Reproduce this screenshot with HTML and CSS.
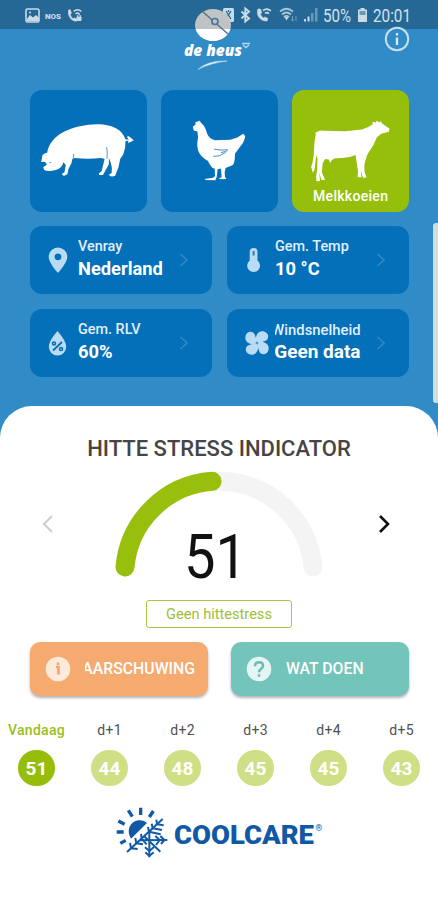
FILE: index.html
```
<!DOCTYPE html>
<html lang="nl">
<head>
  <meta charset="UTF-8" />
  <meta name="viewport" content="width=device-width, initial-scale=1" />
  <title>CoolCare</title>
  <link rel="stylesheet" href="styles.css">
</head>
<body>
  <div class="app">
    <div class="status-bar">
      <div class="status-left">
        <svg width="15" height="15" viewBox="0 0 15 15"><rect x="1" y="1" width="13" height="13" rx="1.5" fill="none" stroke="#c9dbe7" stroke-width="1.6"/><path d="M2 11l3-4 3 2.500 3-2.500 3 3v3H2z" fill="#c9dbe7"/><circle cx="5" cy="4.500" r="1" fill="#c9dbe7"/></svg>
        <svg width="18" height="15" viewBox="0 0 18 15"><text class="nos" x="1" y="10.500" textLength="16" lengthAdjust="spacingAndGlyphs">NOS</text></svg>
        <svg width="17" height="15" viewBox="0 0 17 15"><path d="M2.500 1.500C.5 7 5 13.500 10.500 13.500l1-2.500-3-1.500-1.300 1Q5 9 4.500 6.500l1.300-1.300L4.500 1.500z" fill="#c9dbe7"/><path d="M7.500 3.500Q11.500 0 15.500 3.500M9.500 6Q11.500 4 13.500 6" fill="none" stroke="#c9dbe7" stroke-width="1.300"/><rect x="10.500" y="8.500" width="5" height="4.500" rx="1" fill="#c9dbe7"/><path d="M11.500 9V7.500q1.500-1.800 3 0V9" fill="none" stroke="#c9dbe7"/></svg>
      </div>
      <div class="status-right">
        <svg width="12" height="16" viewBox="0 0 12 16"><rect x="0" y="1" width="11" height="14" rx="1.500" fill="#c9dbe7"/><path d="M3 4l5 8M8 4l-5 8M5.500 3v2" stroke="#256896" stroke-width="1.300"/></svg>
        <svg width="11" height="16" viewBox="0 0 11 16"><path d="M1.500 4.500l7.500 7-3.700 3V1.500L9 4.500l-7.500 7" fill="none" stroke="#c9dbe7" stroke-width="1.900"/></svg>
        <svg width="16" height="16" viewBox="0 0 16 16"><path d="M2 2C-.5 8 4.500 14.500 11 14l.8-2.600-3-1.500-1.300 1Q5 9.500 4.300 7l1.500-1.200L4.500 2z" fill="#c9dbe7" stroke="#c9dbe7" stroke-width=".6"/><path d="M7 3.500Q11 .5 15 4M9 6.500q2-1.800 4 .2" fill="none" stroke="#c9dbe7" stroke-width="1.600"/></svg>
        <svg class="wifi" width="19" height="16" viewBox="0 0 19 16"><path d="M1 4.500Q7.500-1 14 4.500M3 7.500q4.500-4 9 0M5 10q2.500-2.300 5 0" fill="none" stroke="#a9c7da" stroke-width="1.700"/><path d="M7.500 13.500L5.500 10h4z" fill="#c9dbe7"/><path d="M13.500 14V9m-1.500 3.500l1.500 1.500 1.500-1.500M17 9v5" fill="none" stroke="#6f9fbd"/></svg>
        <svg width="15" height="16" viewBox="0 0 15 16"><path d="M1 12h2v2.500H1zM4.500 9.500h2v5h-2z" fill="#c9dbe7"/><path d="M8 6h2.500v8.500H8zM12 1h2.500v13.500H12z" fill="#6799b8"/></svg>
        <svg width="29" height="24" viewBox="0 0 29 24"><text class="clock" x="0" y="18.500" textLength="28" lengthAdjust="spacingAndGlyphs">50%</text></svg>
        <svg width="11" height="16" viewBox="0 0 11 16"><path d="M3.500 1h4v1.500H10V15H1V2.500h2.500z" fill="#c9dbe7"/><path d="M2.500 4h6v4h-6z" fill="#6799b8"/></svg>
        <svg width="39" height="24" viewBox="0 0 39 24"><text class="clock" x="0" y="18.500" textLength="38" lengthAdjust="spacingAndGlyphs">20:01</text></svg>
      </div>
    </div>

    <svg class="brand" width="70" height="65" viewBox="0 0 70 65">
      <clipPath id="disc"><ellipse cx="32" cy="18" rx="18" ry="16"/></clipPath>
      <g clip-path="url(#disc)"><path d="M10 0h50v35H10z" fill="#bfc3c6"/><path d="M10 22h50v15H10z" fill="#fff"/></g>
      <path d="M21 4l26 23" stroke="#526b7d" stroke-width="1.300"/>
      <circle cx="34" cy="14.500" r="3" fill="#bfc3c6" stroke="#47779b" stroke-width="1.700"/>
      <text class="brand-name" x="3" y="49" textLength="58" lengthAdjust="spacingAndGlyphs">de heus</text>
      <path d="M61 36.500h8M62 38l3 2.500 3-2.500" fill="none" stroke="#b7d8ee" stroke-width="1.400"/>
      <path d="M17 62.500Q27 53 46 54 29 56 17 62.500z" fill="#e4f2fb" stroke="#b4d7ee" stroke-width=".6"/>
    </svg>
    <svg class="info" width="26" height="26" viewBox="0 0 26 26"><circle cx="13" cy="13" r="11.200" fill="none" stroke="#c7e0f1" stroke-width="2"/><path d="M13 11.500v7.500M13 7v2.500" stroke="#d8ebf7" stroke-width="2.300"/></svg>

    <div class="animals">
      <div class="animal">
        <svg viewBox="15 14 350 366"><path d="M48 231L52 210Q58 204 66 203C70 175 92 151 118 139C155 120 215 111 250 121C277 126 296 143 302 163L312 163 307 157 309 152 317 157 327 165 317 171 309 174 311 167 302 168Q303 190 295 208L286 222 281 246 271 272Q263 276 254 273L253 268 260 265Q263 249 258 235L252 219 252 238 234 270 222 270 222 265 230 259 239 222 229 219Q187 223 149 219L142 221 139 235 130 253 127 268 116 273 110 267 118 262 122 240 115 232Q110 251 94 254 70 262 57 255L54 247 65 239Q62 227 48 231z" fill="#fff"/><path d="M146 207l-1 12M245 186l2 15-1 20M73 233l5-1" fill="none" stroke="#2e83bd" stroke-width="2.500"/></svg>
      </div>
      <div class="animal">
        <svg viewBox="20 14 350 366"><path d="M115 125L124 117 122 112 135 107 142 115Q153 124 158 145 165 162 182 165L228 164 249 157 267 146 273 153Q270 171 258 184L242 206Q242 231 236 240L214 249 211 262 212 275 216 282 201 283 193 281 202 276 200 251 190 252 187 276 183 286 151 285 154 281 174 279 182 274 181 250Q174 251 169 242L160 227Q139 216 131 196 126 178 131 157L129 139 118 136z" fill="#fff"/><path d="M179 192l22 3 19-1-9 10-15 8-19 2M200 203l13-4" fill="none" stroke="#2877ae" stroke-width="2.500"/></svg>
      </div>
      <div class="animal active">
        <svg viewBox="22 14 350 366"><path d="M91 144Q101 134 117 137L181 138 232 133Q250 128 264 118L264 110 274 112 277 106 283 112 289 108 292 114 315 131 313 140 290 146 277 156Q268 181 253 201L247 211 244 222 239 240 240 262 246 277 236 279 232 270 231 258 229 268 231 277 219 277 220 257 216 232 213 210Q191 220 167 219L148 220 139 228 137 235 132 223 121 222 114 234 111 262 121 284 110 285 103 263 106 288 95 289 94 274 97 256 98 222 94 209 92 232 89 255 84 263 79 246 83 233 87 210 89 170 93 147z" fill="#fff"/></svg>
        <span>Melkkoeien</span>
      </div>
    </div>

    <div class="metrics">
      <div class="metric">
        <svg class="metric-icon" width="26" height="28" viewBox="0 0 26 28"><path fill-rule="evenodd" d="M13 1.500a9.300 9.300 0 0 1 9.300 9.300C22.300 17 13 27 13 27S3.700 17 3.700 10.800A9.300 9.300 0 0 1 13 1.500zm0 5.900a3.400 3.400 0 1 0 0 6.800 3.400 3.400 0 0 0 0-6.800z" fill="#b9dcf4"/></svg>
        <div class="metric-text"><span>Venray</span><b>Nederland</b></div>
        <svg class="chevron" width="10" height="14" viewBox="0 0 10 14"><path d="M1.500 1l6.500 6-6.500 6"/></svg>
      </div>
      <div class="metric">
        <svg class="metric-icon" width="26" height="28" viewBox="0 0 26 28"><path d="M7.700 6a3.900 3.900 0 0 1 7.800 0v8.500a6.400 6.400 0 1 1-7.800 0z" fill="#b9dcf4"/><path d="M11.600 5v4.500" stroke="#3986be" stroke-width="2.200"/></svg>
        <div class="metric-text"><span>Gem. Temp</span><b>10 °C</b></div>
        <svg class="chevron" width="10" height="14" viewBox="0 0 10 14"><path d="M1.500 1l6.500 6-6.500 6"/></svg>
      </div>
      <div class="metric">
        <svg class="metric-icon" width="26" height="28" viewBox="0 0 26 28"><path d="M12.500 2q8.700 10 8.700 15.800a8.700 8.700 0 0 1-17.400 0Q3.800 12 12.500 2z" fill="#b9dcf4"/><path d="M8 21.500l9-8.500" stroke="#086eb4" stroke-width="1.800"/><circle cx="9" cy="14.500" r="1.500" fill="none" stroke="#086eb4" stroke-width="1.600"/><circle cx="16" cy="20" r="1.500" fill="none" stroke="#086eb4" stroke-width="1.600"/></svg>
        <div class="metric-text"><span>Gem. RLV</span><b>60%</b></div>
        <svg class="chevron" width="10" height="14" viewBox="0 0 10 14"><path d="M1.500 1l6.500 6-6.500 6"/></svg>
      </div>
      <div class="metric wind">
        <svg class="metric-icon" width="26" height="28" viewBox="0 0 26 28"><g transform="translate(13 14)" fill="#b9dcf4"><path id="blade" d="M0 0Q-2-4-.5-7.500C1-11.500 4.500-12.300 7.500-11.300 12-10 12.300-4.500 9-2.500Q6-1 0 0z"/><use href="#blade" transform="rotate(90)"/><use href="#blade" transform="rotate(180)"/><use href="#blade" transform="rotate(270)"/></g><circle cx="13" cy="14" r="1.300" fill="#4f9acb"/></svg>
        <div class="metric-text"><span>Windsnelheid</span><b>Geen data</b></div>
        <svg class="chevron" width="10" height="14" viewBox="0 0 10 14"><path d="M1.500 1l6.500 6-6.500 6"/></svg>
      </div>
    </div>

    <div class="scroll-thumb"></div>

    <div class="sheet">
      <h1>HITTE STRESS INDICATOR</h1>
      <div class="gauge-row">
        <svg class="nav" width="14" height="20" viewBox="0 0 14 20"><path d="M11 2l-8 8 8 8" stroke="#ccc" stroke-width="2"/></svg>
        <svg class="gauge" width="208" height="114" viewBox="0 0 208 114">
          <path d="M10 96A94.400 94.400 0 0 1 198 96" stroke="#f4f4f4"/>
          <path d="M10 96A94.400 94.400 0 0 1 97 10.300" stroke="#98bf0c"/>
          <text x="69" y="107" textLength="63" lengthAdjust="spacingAndGlyphs">51</text>
        </svg>
        <svg class="nav" width="14" height="20" viewBox="0 0 14 20"><path d="M3 2l8 8-8 8" stroke="#111" stroke-width="2.600"/></svg>
      </div>
      <div class="stress">Geen hittestress</div>

      <div class="actions">
        <div class="action warn">
          <svg width="26" height="26" viewBox="0 0 26 26"><circle cx="13" cy="13" r="12.300" fill="#fdeadb"/><path d="M11 11h2.500v7.500M13 6.500v2.500" fill="none" stroke="#f0a36b" stroke-width="2.500"/></svg>
          <div class="action-label"><span>WAARSCHUWING</span></div>
        </div>
        <div class="action todo">
          <svg width="26" height="26" viewBox="0 0 26 26"><circle cx="13" cy="13" r="12.300" fill="#e5f5f3"/><path d="M9 10.200q0-4 4-4 4 0 4 3.700c0 2.800-4 3-4 6.300M13 18.200v2.600" fill="none" stroke="#6bbcb2" stroke-width="2.500"/></svg>
          <div class="action-label"><span>WAT DOEN</span></div>
        </div>
      </div>

      <div class="days">
        <div class="day today"><span>Vandaag</span><b>51</b></div>
        <div class="day"><span>d+1</span><b>44</b></div>
        <div class="day"><span>d+2</span><b>48</b></div>
        <div class="day"><span>d+3</span><b>45</b></div>
        <div class="day"><span>d+4</span><b>45</b></div>
        <div class="day"><span>d+5</span><b>43</b></div>
      </div>

      <svg class="coolcare" width="230" height="60" viewBox="0 0 690 180">
        <g fill="none" stroke="#1159a6" stroke-width="10">
          <path d="M35 99h21M40 66l19 10M70 34l12 19M107 26v22M145 36l-12 18M46 133l16-9"/>
        </g>
        <path d="M78 119C60 88 82 62 106 64q12 0 20 8z" fill="#1159a6"/>
        <g fill="none" stroke="#1159a6" stroke-width="6">
          <path d="M66 159L173 60M133 101v74M105 124l82-1M116 110l50 48"/>
          <path d="M78 148l-3-16M78 148l20 2M94 133l-3-16M94 133l20 3M110 118l-2-13M110 119l15 17M156 76l-2-14M156 76l20 3M143 88l-3-14M143 88l28 5M132 98l-3-14M132 98l35 8M121 160l12 11 13-11M120 145l13 11 14-12M164 123l-13-12M164 123l-11 15M178 123l-12-12M178 123l-10 12"/>
        </g>
        <text class="cool-name" x="207" y="134" textLength="420" lengthAdjust="spacingAndGlyphs">COOLCARE</text>
        <text class="cool-reg" x="631" y="95">®</text>
      </svg>
    </div>
  </div>
</body>
</html>
```
FILE: styles.css
```
* { box-sizing: border-box; }

body {
  margin: 0;
  font-family: Roboto, sans-serif;
  background: #fff;
}

svg { display: block; flex-shrink: 0; overflow: visible; }

.app {
  position: relative;
  width: 438px;
  height: 900px;
  overflow: hidden;
  background: #318bc6;
}

.status-bar {
  height: 29px;
  display: flex;
  justify-content: space-between;
  align-items: center;
  padding: 1px 26px 0 25px;
  background: #256896;
}

.status-left, .status-right { display: flex; align-items: center; }
.status-left { gap: 4px; }
.status-right { gap: 5px; }
.wifi { margin-left: 2px; }
.nos { font-size: 8px; font-weight: 900; fill: #c9dbe7; }
.clock { font-size: 18px; fill: #d3e1eb; }

/* the logo hangs over the status bar */
.brand {
  position: absolute;
  left: 181px;
  top: 7px;
}

.brand-name {
  font-family: "Open Sans", sans-serif;
  font-size: 15px;
  font-style: italic;
  font-weight: 800;
  fill: #fff;
}

.info {
  position: absolute;
  left: 384px;
  top: 26px;
}

.animals {
  display: grid;
  grid-template-columns: repeat(3, 1fr);
  gap: 14.5px;
  padding: 61px 29px 0 30px;
}

.animal {
  position: relative;
  height: 121.5px;
  border-radius: 12px;
  background: #0470b9;
}

.animal svg { width: 100%; height: 100%; }
.animal.active { background: #96bf0c; }

.animal span {
  position: absolute;
  left: 0;
  right: 0;
  bottom: 6.5px;
  text-align: center;
  font-size: 14px;
  font-weight: 500;
  line-height: 18px;
  letter-spacing: .3px;
  color: #fff;
}

.metrics {
  display: grid;
  grid-template-columns: 1fr 1fr;
  gap: 15px;
  padding: 14.5px 29px 0 30px;
}

.metric {
  height: 68px;
  display: flex;
  align-items: center;
  padding: 0 23px 0 15px;
  border-radius: 12px;
  background: #0470b9;
}

.metric-text {
  width: 88px;
  margin: -3px 0 0 7px;
  overflow: hidden;
  display: flex;
  flex-direction: column;
  white-space: nowrap;
  color: #fff;
}

.metric-text span { font-size: 14.4px; line-height: 20px; font-weight: 500; color: #e0effa; }
.metric-text b { font-size: 18.3px; line-height: 24px; font-weight: 700; }

/* long labels run out of their box on the left */
.wind .metric-icon { margin-left: 2px; }
.wind .metric-text {
  width: 86px;
  margin-left: 4.5px;
  align-items: flex-end;
}
.wind .metric-text span { font-size: 14.8px; }
.wind .metric-text b { font-size: 19px; }

.chevron { margin-left: auto; }
.chevron path { fill: none; stroke: #3089c7; stroke-width: 1.6; }

.scroll-thumb {
  position: absolute;
  right: 0;
  top: 223px;
  width: 5.5px;
  height: 180px;
  border-radius: 3px 0 0 3px;
  background: #cfdde6;
}

.sheet {
  height: 494px;
  margin-top: 29px;
  padding-top: 28.5px;
  border-radius: 32px 32px 0 0;
  background: #fff;
}

h1 {
  margin: 0;
  text-align: center;
  font-size: 22px;
  line-height: 28px;
  font-weight: 500;
  color: #454545;
}

.gauge-row {
  display: flex;
  justify-content: space-between;
  padding: 8px 47px 0 41px;
}

.nav { margin-top: 43px; }
.nav path { fill: none; }
.gauge { margin-left: 6.5px; }
.gauge path { fill: none; stroke-width: 19; stroke-linecap: round; }
.gauge text { font-size: 61.5px; fill: #111; }

.stress {
  width: 146px;
  height: 28px;
  margin: 15px auto 0;
  border: 1.5px solid #a8c743;
  border-radius: 3px;
  text-align: center;
  font-size: 14.6px;
  line-height: 27px;
  color: #9fbe38;
}

.actions {
  display: grid;
  grid-template-columns: 1fr 1fr;
  gap: 23px;
  padding: 14px 29px 0 30px;
}

.action {
  height: 54px;
  display: flex;
  align-items: center;
  padding-left: 15px;
  border-radius: 10px;
  box-shadow: 0 2px 3px rgba(0, 0, 0, .3);
}

.warn { background: #f5aa70; }
.todo { background: #73c4ba; }

.action-label {
  width: 110px;
  margin-left: 14px;
  overflow: hidden;
  display: flex;
  font-size: 15.8px;
  font-weight: 500;
  color: #fff;
}

.warn .action-label { justify-content: flex-end; }

.days {
  display: grid;
  grid-template-columns: repeat(6, 73px);
  padding-top: 25px;
}

.day {
  display: flex;
  flex-direction: column;
  align-items: center;
  font-size: 14px;
  color: #505050;
}

.day span { line-height: 18px; letter-spacing: .3px; }

.day b {
  width: 36.5px;
  height: 36.5px;
  margin-top: 11px;
  border-radius: 50%;
  text-align: center;
  font-size: 19px;
  line-height: 37px;
  font-weight: 700;
  color: #fff;
  background: #cfdf85;
}

.today span { font-weight: 500; color: #98bd20; }
.today b { background: #97bd0b; }

.coolcare { margin: 13px 0 0 105px; }
.cool-name { font-size: 75px; font-weight: 900; fill: #1159a6; }
.cool-reg { font-size: 27px; fill: #1159a6; }
```
